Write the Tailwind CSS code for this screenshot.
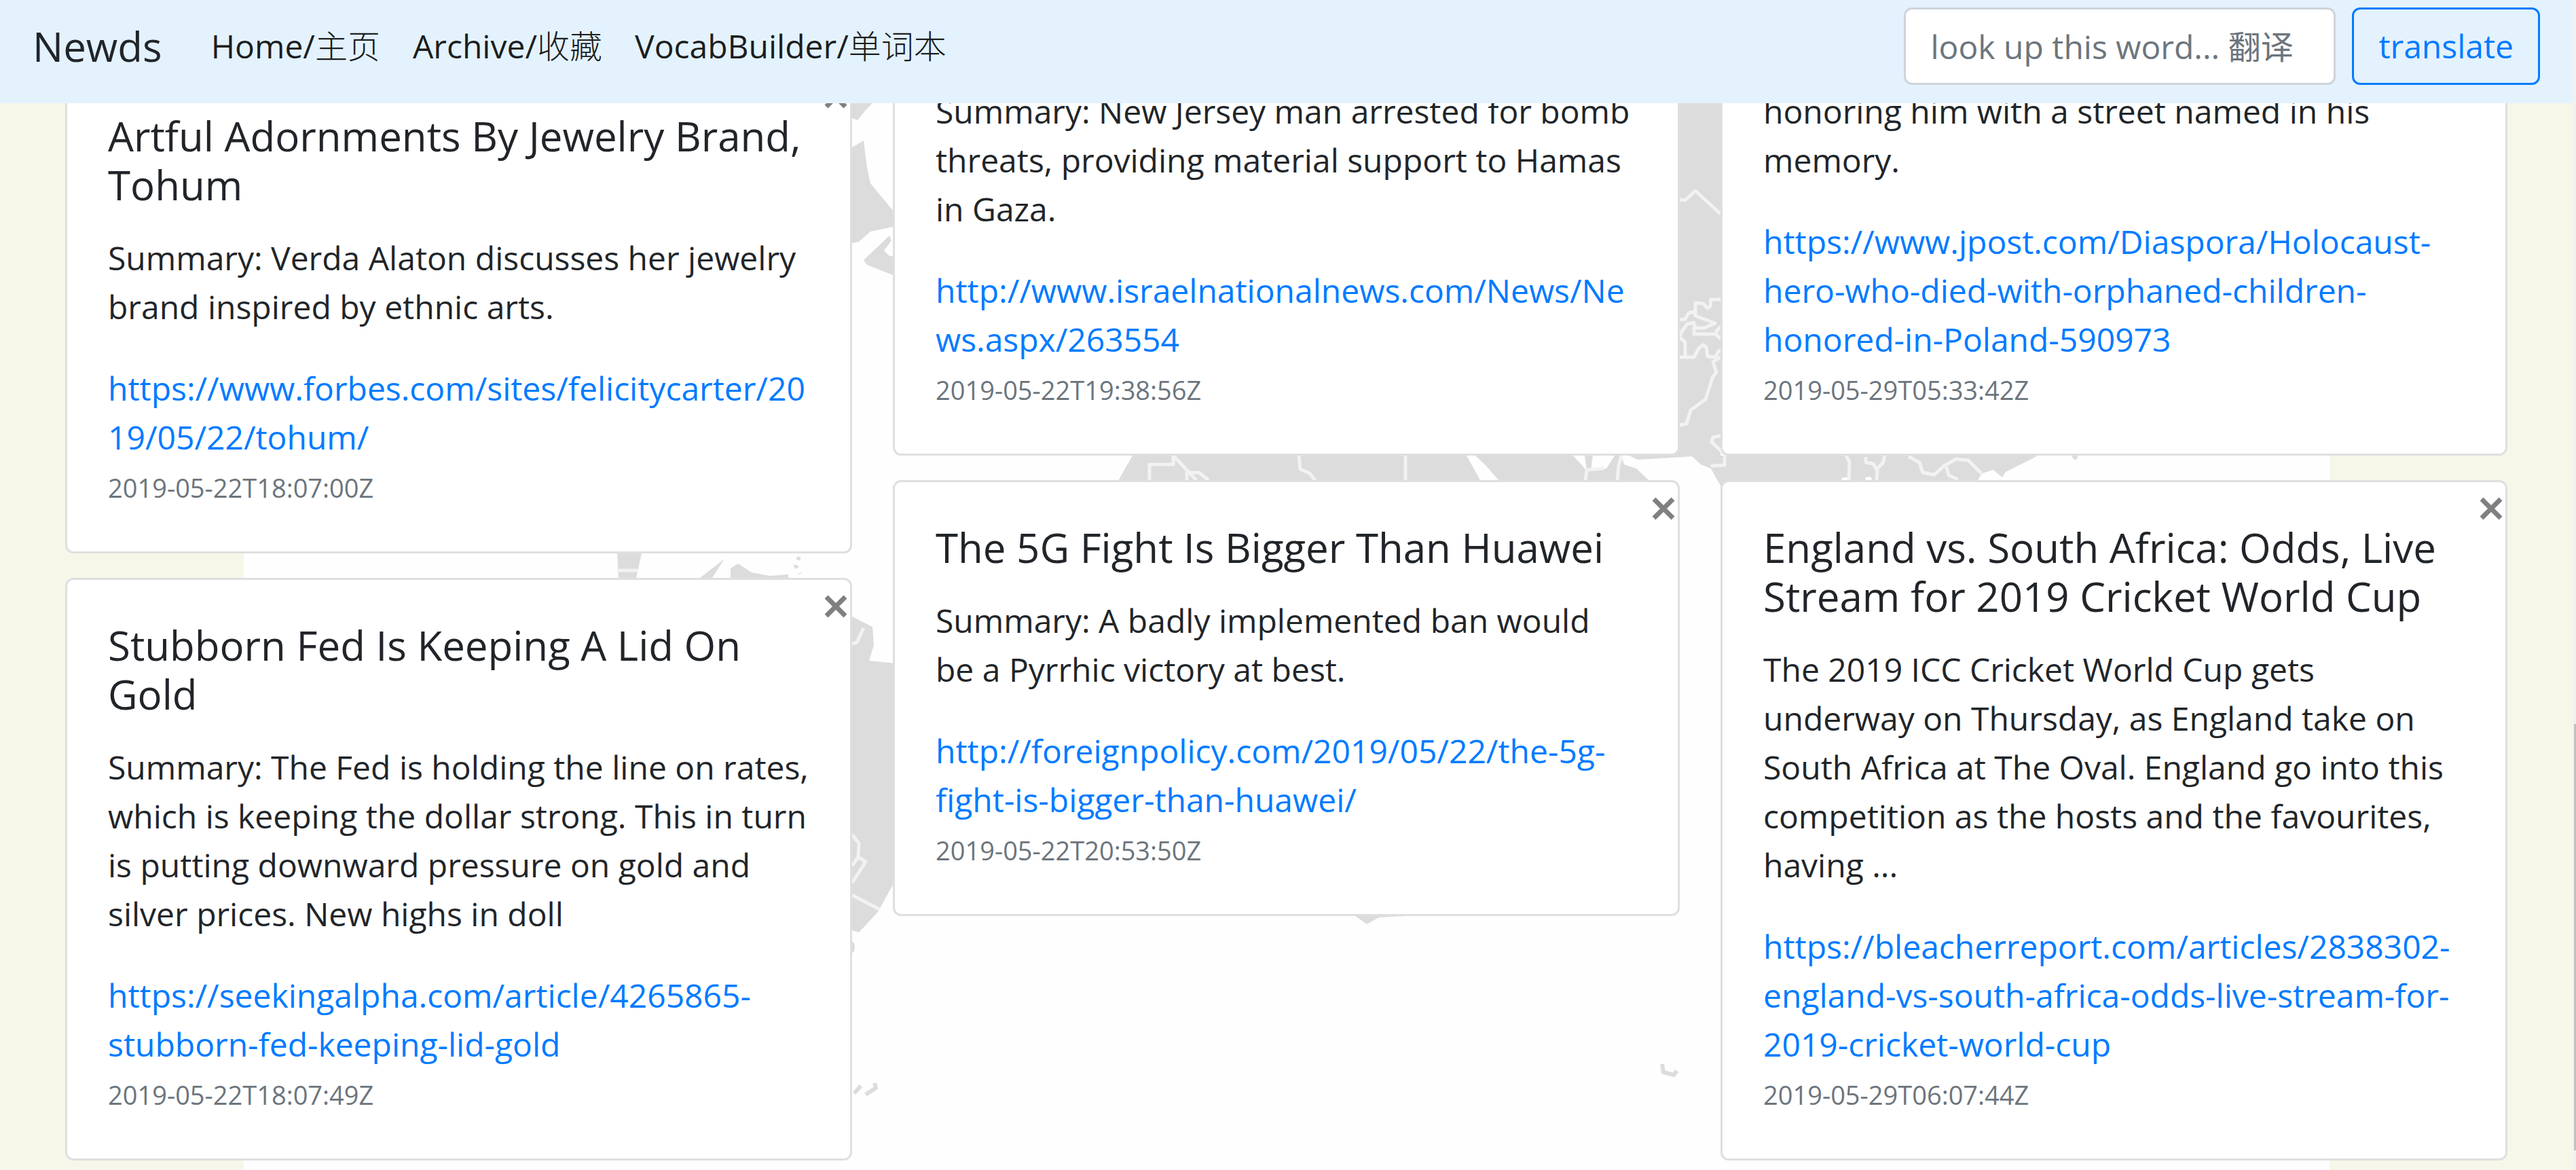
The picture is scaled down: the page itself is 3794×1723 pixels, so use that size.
<!DOCTYPE html>
<html lang="en">
<head>
<meta charset="utf-8">
<title>Newds</title>
<script src="https://cdn.jsdelivr.net/npm/@tailwindcss/browser@4"></script>
</head>
<body class="flex min-h-screen bg-[#f7f7e9] font-['Open_Sans','Noto_Sans_CJK_SC',sans-serif] text-[48px] leading-[72px] text-[#212529]">
<svg class="hidden" aria-hidden="true">
  <symbol id="cross" viewBox="0 0 34 34"><path d="M3 3L31 31M31 3L3 31" fill="none" stroke="#808080" stroke-width="7"/></symbol>
</svg>
<div class="relative min-w-0 flex-1">
  <!-- world map behind the cards -->
  <div class="absolute inset-0 flex justify-center overflow-hidden" aria-hidden="true">
    <svg class="h-full w-[3072px] shrink-0 bg-[#fefefe]" viewBox="359 0 3072 1723" preserveAspectRatio="xMidYMin slice">
      <g fill="#dcdcdc">
        <path d="M1200 152H1285L1275 162 1263 177 1255 174 1200 190Z"/>
        <path d="M1200 240L1255 217 1272 207 1277 247 1282 270 1315 310 1330 320V332L1315 334 1282 341 1265 356 1255 358 1200 340Z"/>
        <path d="M1272 383L1310 347 1313 354 1302 369 1310 377 1330 379V410L1315 405 1277 390Z"/>
        <path d="M909 815H945L937 851H911Z"/>
        <path d="M1067 823L1049 851H1031Z"/>
        <path d="M1076 851V837L1087 830 1107 843 1134 848 1161 846V851Z"/>
        <path d="M1177 820L1172 833 1178 845" fill="none" stroke="#dedede" stroke-width="6" stroke-dasharray="5 8"/>
        <path d="M1200 890L1255 908 1285 923 1287 950 1280 973 1330 978V1280L1315 1303 1293 1343 1265 1373 1255 1370 1200 1350Z"/>
        <ellipse cx="1255" cy="1395" rx="4" ry="8"/>
        <path d="M1680 650H2474V152H2534V671H3001L2994 675 2954 695 2949 703 2936 692 2919 697 2913 707V720H2540L2536 718 2530 705 2520 690 2512 671H1673L1652 707V720H1640Z"/>
        <path d="M1652 707L1673 671H2520L2540 720H1645Z"/>
        <path d="M1996 1349L2013 1361 2031 1351 2070 1349Z"/>
      </g>
      <g fill="#fefefe">
        <path d="M2160 671H2173L2188 685 2207 707H2180Z"/>
        <path d="M2317 671L2337 693 2334 671Z"/>
        <path d="M2346 671H2378L2366 690 2343 692Z"/>
        <path d="M2388 671H2400L2412 677 2446 675 2492 672 2505 684 2520 690 2528 705 2536 718V725H2440L2428 707 2410 690 2392 684Z"/>
        <ellipse cx="2718" cy="706" rx="6" ry="3"/>
        <ellipse cx="2752" cy="705" rx="5" ry="3"/>
      </g>
      <g fill="none" stroke="#f2f2f2" stroke-width="5" stroke-linejoin="round">
        <path d="M2474 294L2482 295 2497 281 2534 315"/>
        <path d="M2474 471L2482 470 2487 461 2497 459V446L2508 447 2515 454 2519 451 2520 441H2534"/>
        <path d="M2497 459V465L2526 476 2510 483H2495V492H2527L2528 488 2534 481M2527 492L2534 499"/>
        <path d="M2474 495L2477 488 2485 477 2495 475 2496 484"/>
        <path d="M2474 497L2482 504V526M2474 526H2495L2502 513 2508 508 2513 511 2515 525 2527 526 2530 519 2534 515"/>
        <path d="M2534 526L2523 533 2528 549 2523 554 2512 588 2490 604 2484 624 2474 626"/>
        <path d="M2534 642L2523 644 2521 651 2540 669V685L2520 686"/>
        <path d="M1693 707V684H1728V671L1762 707M1748 707V696H1766L1780 707"/>
        <path d="M1913 671L1915 691 1929 697 1937 707M2070 671V707M2335 707L2337 692 2362 690M2382 707L2384 686 2388 671"/>
        <path d="M909 840H939"/>
        <path d="M1255 948L1262 946 1272 925M1255 1229L1265 1242 1264 1262 1275 1269 1255 1300M1264 1262L1255 1275M1255 1318L1295 1339"/>
        <path d="M2719 671L2724 680 2723 707M2748 673V681L2759 683 2765 693 2764 707M2776 671L2773 682 2762 693"/>
        <path d="M2811 672L2827 681 2832 696 2849 699 2862 687 2881 676 2899 678 2918 697M2867 688L2870 700 2884 706"/>
      </g>
      <g fill="none" stroke="#dcdcdc" stroke-width="6">
        <path d="M1258 1610L1268 1599M1288 1595L1290 1602 1275 1612"/>
        <path d="M2448 1567L2450 1579 2465 1583 2470 1577"/>
        <path d="M3053 671L3059 675"/>
      </g>
    </svg>
  </div>

  <nav class="relative z-10 flex h-[152px] items-center justify-between bg-[#e3f2fd] px-12 pt-[11px] pb-[27px]">
    <div class="flex items-center">
      <a href="#" class="mr-12 text-[60px] leading-[90px]">Newds</a>
      <a href="#" class="px-6 text-black/90">Home/<span class="font-light">主页</span></a>
      <a href="#" class="px-6 text-black/90">Archive/<span class="font-light">收藏</span></a>
      <a href="#" class="px-6 text-black/90">VocabBuilder/<span class="font-light">单词本</span></a>
    </div>
    <form class="flex gap-6">
      <input type="search" aria-label="Word to translate" placeholder="look up this word... 翻译" class="h-[114px] w-[636px] rounded-xl border-3 border-[#ced4da] bg-white px-9 placeholder:text-[#6c757d] placeholder:opacity-100">
      <button type="button" class="h-[114px] rounded-xl border-3 border-[#007bff] px-9 text-[#007bff]">translate</button>
    </form>
  </nav>

  <!-- scrolled list: its first row passes under the navigation bar -->
  <main class="relative -mt-[87px] grid grid-cols-3 items-start gap-[60px] px-24">
    <div class="flex min-w-0 flex-col gap-9 pt-9">
      <article class="relative rounded-xl border-3 border-[#dfdfdf] bg-white p-[60px]">
        <button type="button" aria-label="Close" class="absolute top-0 right-0 flex h-[77px] items-center pr-1"><svg class="size-[34px]"><use href="#cross"/></svg></button>
        <h5 class="mb-9 text-[60px]">Artful Adornments By Jewelry Brand, Tohum</h5>
        <p class="mb-12">Summary: Verda Alaton discusses her jewelry brand inspired by ethnic arts.</p>
        <a href="#" class="block break-all text-[#007bff]">https://www.forbes.com/sites/felicitycarter/2019/05/22/tohum/</a>
        <small class="block text-[38px] text-[#6c757d] pt-1 leading-[68px]">2019-05-22T18:07:00Z</small>
      </article>
      <article class="relative rounded-xl border-3 border-[#dfdfdf] bg-white p-[60px]">
        <button type="button" aria-label="Close" class="absolute top-0 right-0 flex h-[77px] items-center pr-1"><svg class="size-[34px]"><use href="#cross"/></svg></button>
        <h5 class="mb-9 text-[60px]">Stubborn Fed Is Keeping A Lid On Gold</h5>
        <p class="mb-12">Summary: The Fed is holding the line on rates, which is keeping the dollar strong. This in turn is putting downward pressure on gold and silver prices. New highs in doll</p>
        <a href="#" class="block wrap-anywhere text-[#007bff]">https://seekingalpha.com/article/4265865-stubborn-fed-keeping-lid-gold</a>
        <small class="block text-[38px] text-[#6c757d] pt-1 leading-[68px]">2019-05-22T18:07:49Z</small>
      </article>
    </div>

    <div class="flex min-w-0 flex-col gap-9">
      <article class="relative rounded-xl border-3 border-[#dfdfdf] bg-white p-[60px]">
        <p class="mb-12">Summary: New Jersey man arrested for bomb threats, providing material support to Hamas in Gaza.</p>
        <a href="#" class="block break-all text-[#007bff]">http://www.israelnationalnews.com/News/News.aspx/263554</a>
        <small class="block text-[38px] text-[#6c757d] pt-1 leading-[68px]">2019-05-22T19:38:56Z</small>
      </article>
      <article class="relative rounded-xl border-3 border-[#dfdfdf] bg-white p-[60px]">
        <button type="button" aria-label="Close" class="absolute top-0 right-0 flex h-[77px] items-center pr-1"><svg class="size-[34px]"><use href="#cross"/></svg></button>
        <h5 class="mb-9 text-[60px]">The 5G Fight Is Bigger Than Huawei</h5>
        <p class="mb-12">Summary: A badly implemented ban would be&nbsp;a Pyrrhic victory at best.</p>
        <a href="#" class="block wrap-anywhere text-[#007bff]">http://foreignpolicy.com/2019/05/22/the-5g-fight-is-bigger-than-huawei/</a>
        <small class="block text-[38px] text-[#6c757d] pt-1 leading-[68px]">2019-05-22T20:53:50Z</small>
      </article>
    </div>

    <div class="flex min-w-0 flex-col gap-9">
      <article class="relative rounded-xl border-3 border-[#dfdfdf] bg-white p-[60px]">
        <p class="mb-12">honoring him with a street named in his memory.</p>
        <a href="#" class="block wrap-anywhere text-[#007bff]">https://www.jpost.com/Diaspora/Holocaust-hero-who-died-with-orphaned-children-honored-in-Poland-590973</a>
        <small class="block text-[38px] text-[#6c757d] pt-1 leading-[68px]">2019-05-29T05:33:42Z</small>
      </article>
      <article class="relative rounded-xl border-3 border-[#dfdfdf] bg-white p-[60px]">
        <button type="button" aria-label="Close" class="absolute top-0 right-0 flex h-[77px] items-center pr-1"><svg class="size-[34px]"><use href="#cross"/></svg></button>
        <h5 class="mb-9 text-[60px]">England vs. South Africa: Odds, Live Stream for 2019 Cricket World Cup</h5>
        <p class="mb-12">The 2019 ICC Cricket World Cup gets underway on Thursday, as England take on South Africa at The Oval. England go into this competition as the hosts and the favourites, having ...</p>
        <a href="#" class="block wrap-anywhere text-[#007bff]">https://bleacherreport.com/articles/2838302-england-vs-south-africa-odds-live-stream-for-2019-cricket-world-cup</a>
        <small class="block text-[38px] text-[#6c757d] pt-1 leading-[68px]">2019-05-29T06:07:44Z</small>
      </article>
    </div>
  </main>
</div>

<!-- scroll track and thumb -->
<div class="flex w-[5px] flex-col items-end bg-[#f1f1f1]" aria-hidden="true">
  <div class="grow-[1066]"></div>
  <div class="w-[3px] grow-[628] bg-[#c1c1c1]"></div>
  <div class="grow-[29]"></div>
</div>
</body>
</html>
